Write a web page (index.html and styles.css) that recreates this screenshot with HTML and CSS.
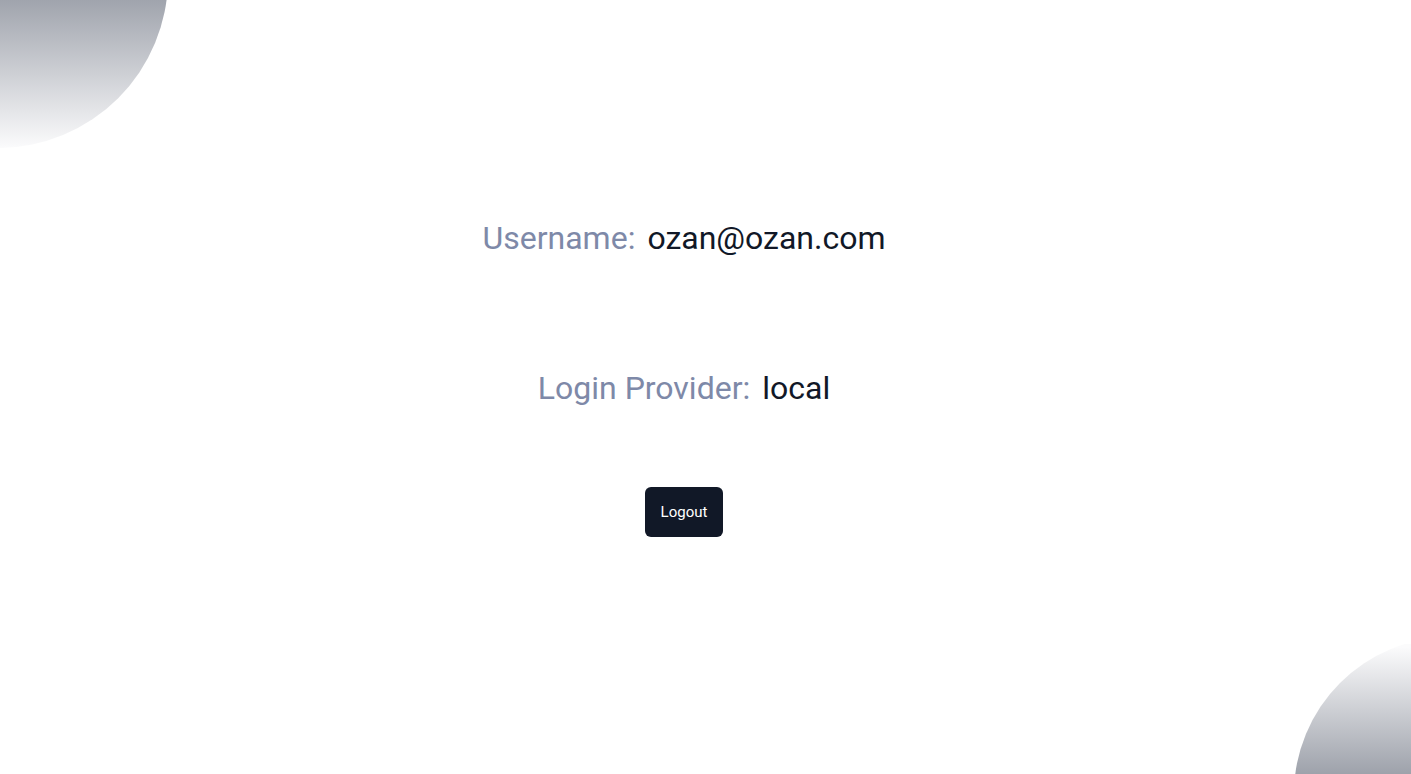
FILE: index.html
```html
<!DOCTYPE html>
<html lang="en">
<head>
<meta charset="utf-8">
<title>Profile</title>
<link rel="stylesheet" href="styles.css">
</head>
<body>
<svg class="blob blob-top" width="170" height="150" viewBox="0 0 170 150" aria-hidden="true">
  <defs>
    <linearGradient id="gTop" gradientUnits="userSpaceOnUse" x1="0" y1="0" x2="0" y2="148">
      <stop offset="0" stop-color="#a0a4ad"/>
      <stop offset="1" stop-color="#fbfbfc"/>
    </linearGradient>
  </defs>
  <circle cx="-2" cy="-22" r="170" fill="url(#gTop)"/>
</svg>
<svg class="blob blob-bottom" width="117" height="130" viewBox="0 0 117 130" aria-hidden="true">
  <defs>
    <linearGradient id="gBottom" gradientUnits="userSpaceOnUse" x1="0" y1="3" x2="0" y2="130">
      <stop offset="0" stop-color="#fbfbfc"/>
      <stop offset="1" stop-color="#9ea2ab"/>
    </linearGradient>
  </defs>
  <circle cx="157" cy="150" r="157" fill="url(#gBottom)"/>
</svg>
<main class="profile">
  <div class="row row-user"><span class="label">Username:</span><span class="value">ozan@ozan.com</span></div>
  <div class="row row-provider"><span class="label">Login Provider:</span><span class="value">local</span></div>
  <button class="logout" type="button">Logout</button>
</main>
</body>
</html>
```

FILE: styles.css
```css
html, body {
  margin: 0;
  padding: 0;
  height: 100%;
  background: #ffffff;
  font-family: Roboto, "Liberation Sans", sans-serif;
  overflow: hidden;
}

body {
  position: relative;
}

.blob {
  position: absolute;
  display: block;
}

.blob-top {
  left: 0;
  top: 0;
}

.blob-bottom {
  right: 0;
  bottom: 0;
}

.profile {
  display: flex;
  flex-direction: column;
  align-items: center;
  padding-top: 218px;
  margin-right: 43px;
}

.row {
  display: flex;
  align-items: baseline;
  gap: 12px;
  font-size: 32px;
  line-height: 40px;
}

.row-provider {
  margin-top: 110px;
}

.label {
  color: #7e89a8;
}

.value {
  color: #111827;
}

.logout {
  margin-top: 79px;
  height: 50px;
  padding: 0 16px;
  border: none;
  border-radius: 6px;
  background: #111827;
  color: #ffffff;
  font-family: Roboto, "Liberation Sans", sans-serif;
  font-size: 15px;
  cursor: pointer;
}
```
